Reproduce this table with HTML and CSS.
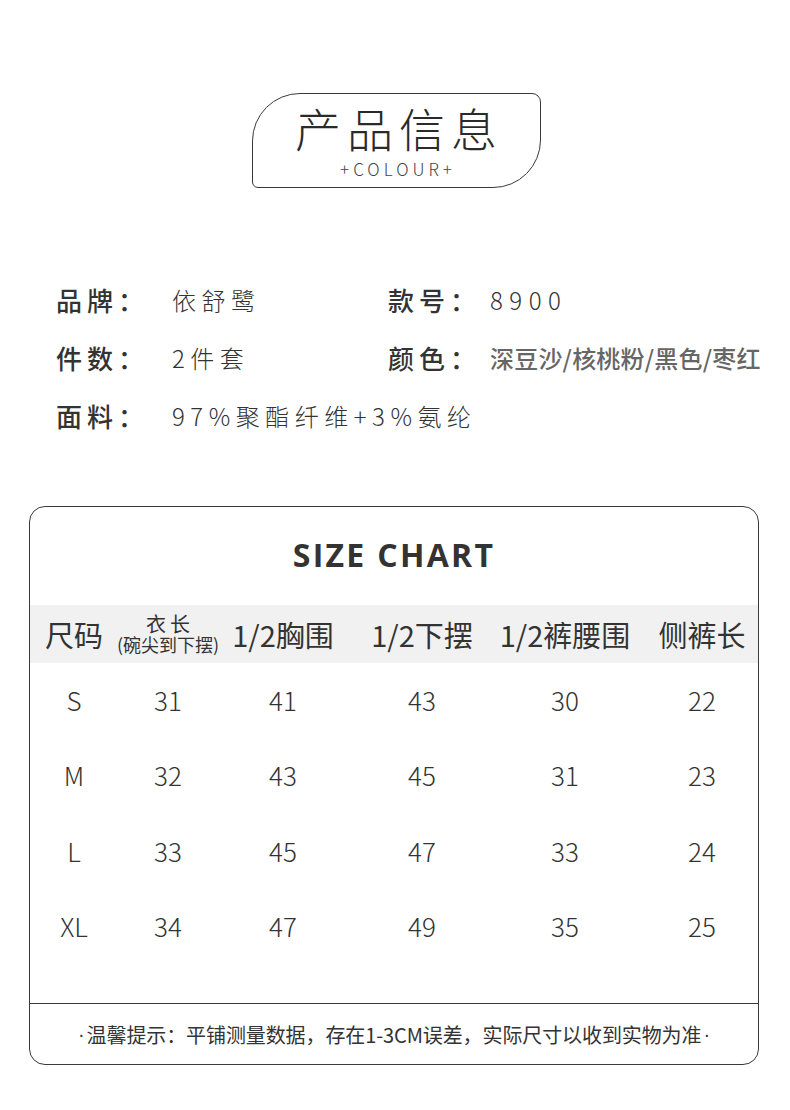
FILE: index.html
```html
<!DOCTYPE html>
<html lang="zh">
<head>
<meta charset="utf-8">
<link rel="stylesheet" href="styles.css">
</head>
<body>
<div class="page">
  <div class="title-wrap">
    <div class="title-box">
      <div class="title-cn">产品信息</div>
      <div class="title-en">+COLOUR+</div>
    </div>
  </div>

  <div class="info">
    <div class="info-item"><span class="lbl">品牌：</span><span class="val">依舒鹭</span></div>
    <div class="info-item col2"><span class="lbl">款号：</span><span class="val">8900</span></div>
    <div class="info-item"><span class="lbl">件数：</span><span class="val">2件套</span></div>
    <div class="info-item col2"><span class="lbl">颜色：</span><span class="val val-color">深豆沙/核桃粉/黑色/枣红</span></div>
    <div class="info-item wide"><span class="lbl">面料：</span><span class="val">97%聚酯纤维+3%氨纶</span></div>
  </div>

  <div class="chart">
    <div class="chart-title">SIZE CHART</div>
    <div class="row head">
      <div class="c">尺码</div>
      <div class="c two"><span class="t1">衣长</span><span class="t2">(碗尖到下摆)</span></div>
      <div class="c">1/2胸围</div>
      <div class="c">1/2下摆</div>
      <div class="c">1/2裤腰围</div>
      <div class="c">侧裤长</div>
    </div>
    <div class="row"><div class="c">S</div><div class="c">31</div><div class="c">41</div><div class="c">43</div><div class="c">30</div><div class="c">22</div></div>
    <div class="row"><div class="c">M</div><div class="c">32</div><div class="c">43</div><div class="c">45</div><div class="c">31</div><div class="c">23</div></div>
    <div class="row"><div class="c">L</div><div class="c">33</div><div class="c">45</div><div class="c">47</div><div class="c">33</div><div class="c">24</div></div>
    <div class="row"><div class="c">XL</div><div class="c">34</div><div class="c">47</div><div class="c">49</div><div class="c">35</div><div class="c">25</div></div>
    <div class="spacer"></div>
    <div class="note"><span class="dot">·</span>温馨提示：平铺测量数据，存在1-3CM误差，实际尺寸以收到实物为准<span class="dot">·</span></div>
  </div>
</div>
</body>
</html>
```
FILE: styles.css
```css
html, body {
  margin: 0;
  padding: 0;
  background: #fff;
}
body {
  font-family: "Noto Sans CJK SC", "Noto Sans", sans-serif;
  color: #333;
}
.page {
  width: 790px;
  height: 1110px;
  overflow: hidden;
}
.title-wrap {
  padding-top: 93px;
  display: flex;
  justify-content: center;
  padding-left: 2px;
}
.title-box {
  width: 287px;
  height: 93px;
  border: 1.5px solid #3a3a3a;
  border-radius: 48px 9px 48px 6px;
  display: flex;
  flex-direction: column;
  align-items: center;
}
.title-cn {
  margin-top: 8px;
  font-size: 46px;
  font-weight: 300;
  letter-spacing: 6px;
  padding-left: 6px;
  line-height: 50px;
  color: #2a2a2a;
}
.title-en {
  font-size: 17px;
  letter-spacing: 4px;
  line-height: 20px;
  font-weight: 300;
  color: #444;
  margin-top: 7px;
  padding-left: 4px;
}
.info {
  margin-top: 92px;
  padding-left: 56px;
  display: grid;
  grid-template-columns: 332px 1fr;
  row-gap: 20px;
}
.info-item {
  display: flex;
  align-items: center;
  height: 38px;
  white-space: nowrap;
}
.info-item.wide {
  grid-column: 1 / 3;
}
.lbl {
  font-size: 26px;
  font-weight: 500;
  width: 116px;
  color: #333;
  letter-spacing: 5px;
}
.col2 .lbl {
  width: 102px;
}
.val {
  font-size: 24px;
  font-weight: 300;
  letter-spacing: 5.5px;
  color: #333;
}
.col2 .val {
  letter-spacing: 6.5px;
}
.col2 .val.val-color {
  font-size: 24px;
  letter-spacing: 0.2px;
  color: #666;
  font-weight: 500;
}
.chart {
  margin: 72px 0 0 29px;
  width: 728px;
  height: 557px;
  border: 1.3px solid #3a3a3a;
  border-radius: 16px;
  display: flex;
  flex-direction: column;
}
.chart-title {
  height: 98px;
  display: flex;
  align-items: center;
  justify-content: center;
  font-family: "Open Sans", "Noto Sans", sans-serif;
  font-weight: 700;
  font-size: 32px;
  letter-spacing: 2.3px;
  color: #333;
  padding-bottom: 4px;
  box-sizing: border-box;
}
.row {
  display: grid;
  grid-template-columns: 88px 100px 130px 148px 138px 124px;
  height: 75.5px;
  align-items: center;
  padding-bottom: 3px;
  box-sizing: border-box;
}
.row.head {
  height: 58px;
  background: #f1f1f1;
  padding-bottom: 0;
}
.c {
  text-align: center;
  font-size: 26px;
  font-weight: 300;
  color: #333;
  white-space: nowrap;
}
.row .c:last-child {
  padding-left: 12px;
}
.head .c {
  font-size: 29px;
  font-weight: 400;
  color: #333;
}
.head .c.two {
  display: flex;
  flex-direction: column;
  align-items: center;
  line-height: 1;
}
.t1 {
  font-size: 20px;
  letter-spacing: 4px;
  padding-left: 4px;
  line-height: 20px;
}
.t2 {
  font-size: 18px;
  margin-top: 1px;
  letter-spacing: 0;
  line-height: 19px;
}
.spacer {
  flex: 1;
  border-bottom: 1.3px solid #3a3a3a;
}
.note {
  height: 60px;
  display: flex;
  align-items: center;
  justify-content: center;
  font-size: 20px;
  color: #333;
  letter-spacing: -0.1px;
}
.dot {
  font-family: "Liberation Sans", sans-serif;
  padding: 0 2px;
}
```
